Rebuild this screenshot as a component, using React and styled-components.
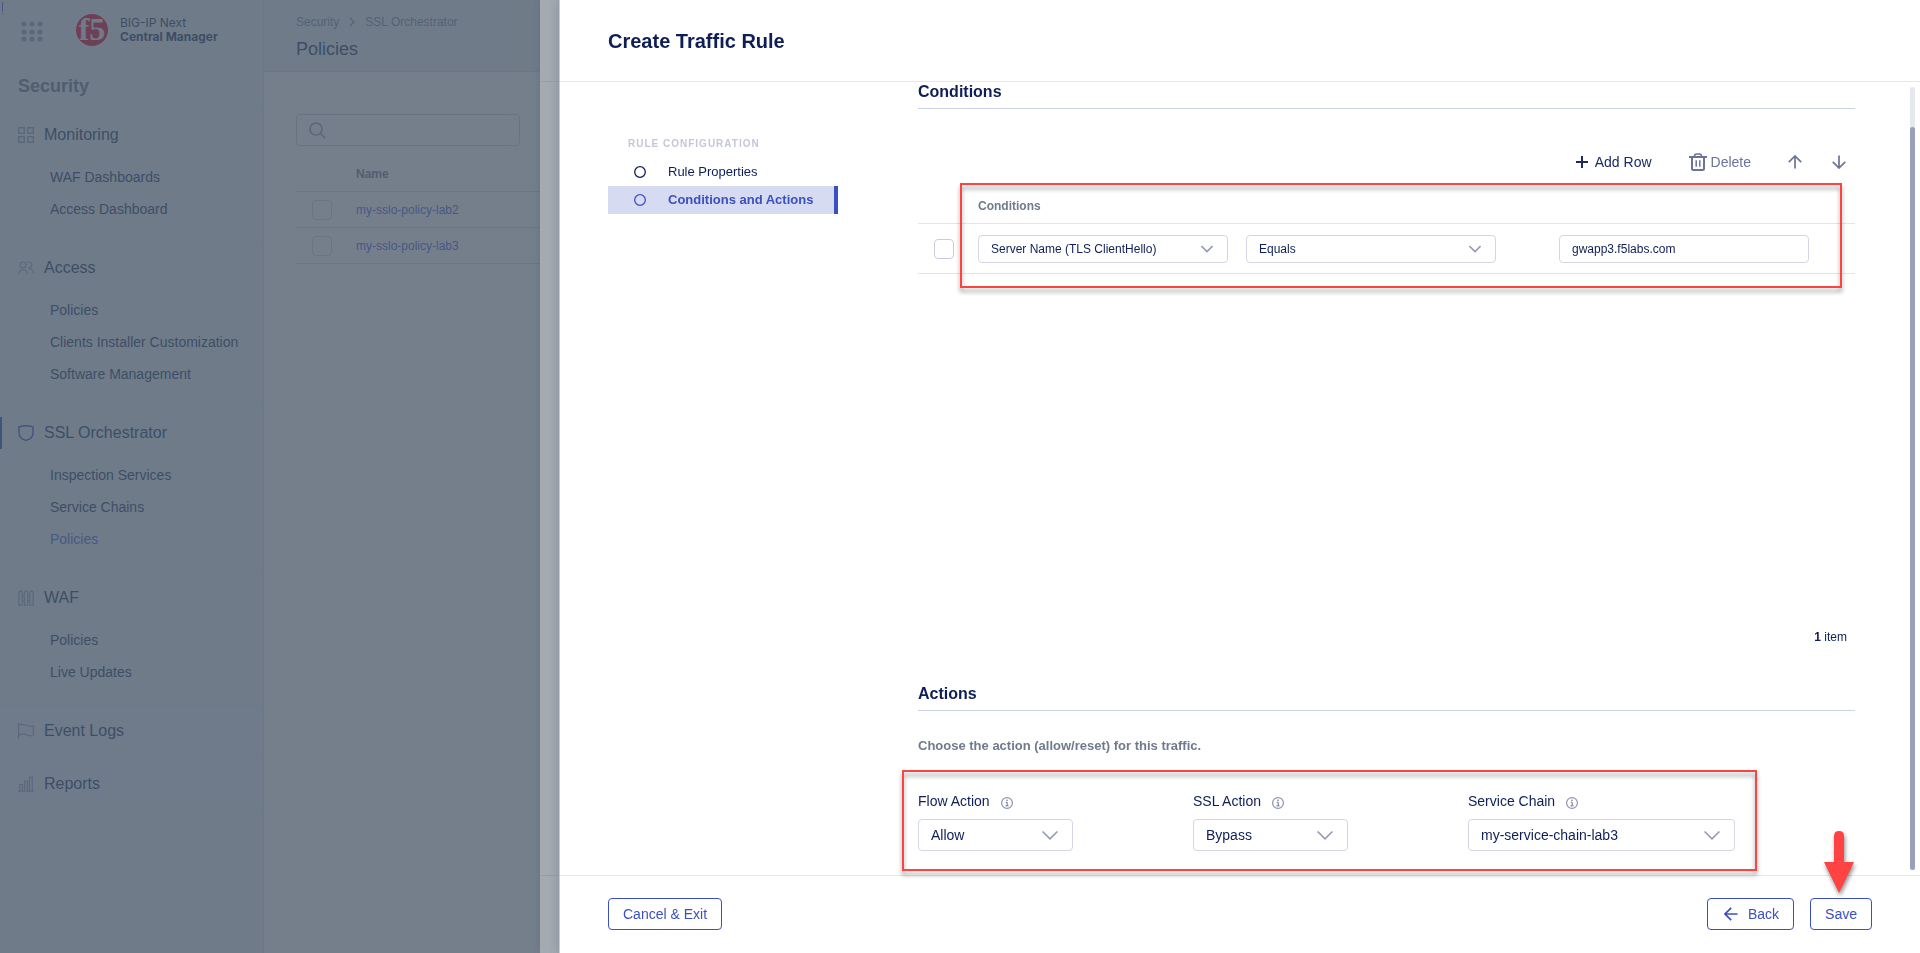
import React from "react";
import styled, { createGlobalStyle, css } from "styled-components";

const c = {
  navy: "#0f1e57",
  ink: "#22356a",
  blue: "#3b50c0",
  link: "#4a60e4",
  slate: "#6f7b8c",
  muted: "#9499b8",
  icon: "#6b739c",
  border: "#d3d6e6",
  rule: "#e4e6f0",
  red: "#ff4343",
};

const GlobalStyle = createGlobalStyle`
  *, *::before, *::after { box-sizing: border-box; }
  body {
    margin: 0;
    background: #fff;
    color: ${c.navy};
    font-family: "Liberation Sans", Arial, sans-serif;
    font-size: 14px;
  }
  button, input, select { font: inherit; color: inherit; }
  h1, h2, p, ul { margin: 0; padding: 0; }
  ul { list-style: none; }
  a { color: inherit; text-decoration: none; }
  svg { display: block; flex: none; }
`;

/* ---------- shared controls ---------- */

const Checkbox = styled.input.attrs({ type: "checkbox" })`
  appearance: none;
  display: block;
  width: 20px;
  height: 20px;
  margin: 0 0 0 16px;
  border: 1px solid ${(p) => (p.$soft ? "#d0d5e2" : "#c9ccdf")};
  border-radius: 4px;
  background: ${(p) => (p.$soft ? "transparent" : "#fff")};
`;

const fieldBox = css`
  width: 100%;
  height: ${(p) => (p.$large ? "32px" : "28px")};
  padding: 0 12px;
  border: 1px solid ${c.border};
  border-radius: 4px;
  background: #fff;
  font-size: ${(p) => (p.$large ? "14px" : "12px")};
`;

const TextInput = styled.input.attrs({ type: "text" })`
  ${fieldBox}
  display: block;
  width: 250px;
`;

const NativeSelect = styled.select`
  ${fieldBox}
  appearance: none;
  grid-area: 1 / 1;
`;

const SelectShell = styled.span`
  display: grid;
  width: ${(p) => p.$width};
  align-items: center;

  svg {
    grid-area: 1 / 1;
    justify-self: end;
    margin-right: 15px;
    pointer-events: none;
  }
`;

function Select({ id, label, value, width = "250px", large }) {
  const size = large ? 16 : 12;
  return (
    <SelectShell $width={width}>
      <NativeSelect id={id} aria-label={label} defaultValue={value} $large={large}>
        <option>{value}</option>
      </NativeSelect>
      <svg width={size} height={size} viewBox={`0 0 ${size} ${size}`} fill="none" stroke={c.muted} strokeWidth="1.600">
        <path d={large ? "M.6 4.500 8 11.900 15.400 4.500" : "M.4 3 6 8.600 11.600 3"} />
      </svg>
    </SelectShell>
  );
}

/* ---------- page behind the drawer ---------- */

const Page = styled.div`
  position: relative;
  display: grid;
  grid-template-columns: 264px 1fr;
  min-height: 100vh;
  background: #fff;
`;

const CornerMark = styled.svg`
  position: absolute;
  top: 2px;
  left: 2px;
`;

const Sidebar = styled.aside`
  border-right: 1px solid #dbe1e6;
  background: #e9eff2;
`;

const Brand = styled.div`
  display: flex;
  align-items: center;
  height: 60px;
  padding-left: 20px;
  gap: 32px;
`;

const BrandLink = styled.a`
  display: flex;
  align-items: center;
  gap: 12px;

  svg {
    overflow: visible;
  }
`;

const BrandText = styled.span`
  display: flex;
  flex-direction: column;
  color: ${c.ink};
  font: 400 12px/14px Inter, sans-serif;

  b {
    font-weight: 700;
  }
`;

const IconButton = styled.button`
  display: flex;
  padding: 0;
  border: 0;
  background: none;
`;

const SideTitle = styled.h2`
  height: 48px;
  padding: 14px 18px 0;
  color: #6c7595;
  font-size: 18px;
  line-height: 24px;
`;

const Section = styled.section`
  border-top: 1px solid #dee4ea;
  background: ${(p) => (p.$plain ? "#eaeef8" : "transparent")};
`;

const SectionLink = styled.a`
  display: flex;
  align-items: center;
  gap: 10px;
  height: 32px;
  margin: 10px 0;
  padding-left: 16px;
  border-left: 2px solid ${(p) => (p.$active ? c.blue : "transparent")};
  color: ${c.ink};
  font-size: 16px;

  svg {
    color: ${(p) => (p.$active ? c.blue : "#98a1b9")};
  }
`;

const SubList = styled.ul`
  padding-bottom: 16px;

  a {
    display: flex;
    align-items: center;
    height: 32px;
    padding-left: 50px;
    color: ${c.ink};
  }

  a[aria-current] {
    color: ${c.link};
  }
`;

const LastLine = styled.div`
  border-top: 1px solid #dee4ea;
`;

const PageHeader = styled.header`
  height: 72px;
  padding: 14px 32px 0;
  border-bottom: 1px solid #d8dee6;
  background: #e9eff2;

  h1 {
    margin-top: 7px;
    color: ${c.ink};
    font-size: 18px;
    font-weight: 400;
    line-height: 24px;
  }
`;

const Crumbs = styled.nav`
  display: flex;
  align-items: center;
  gap: 9px;
  height: 16px;
  color: #7d85a8;
  font-size: 12px;
`;

const PageBody = styled.div`
  padding: 42px 32px;
`;

const Search = styled.label`
  display: flex;
  align-items: center;
  width: 224px;
  height: 32px;
  padding-left: 12px;
  border: 1px solid #c8cede;
  border-radius: 4px;

  input {
    flex: 1;
    min-width: 0;
    border: 0;
    background: none;
  }
`;

const PolicyTable = styled.table`
  width: 100%;
  margin-top: 11px;
  border-collapse: separate;
  border-spacing: 0;
  font-size: 12px;
  text-align: left;

  th,
  td {
    height: 36px;
    padding: 0;
    border-bottom: 1px solid #d8dce4;
  }

  th {
    height: 35px;
    color: ${c.slate};
  }

  th:first-child {
    width: 60px;
  }

  a {
    color: ${c.link};
  }
`;

const glyphs = {
  monitoring: (
    <path d="M.7.7h5.600v5.600H.7zM9.700.7h5.600v5.600H9.700zM.7 9.700h5.600v5.600H.7zM9.700 9.700h5.600v5.600H9.700z" strokeWidth="1.400" />
  ),
  access: (
    <>
      <circle cx="5" cy="5" r="3" />
      <path d="M.7 13.500a4.400 4.400 0 0 1 8.700 0M9 2.600a3 3 0 1 1 1 5.300M11.400 8.900a4.400 4.400 0 0 1 4 4.600" />
    </>
  ),
  shield: <path d="M1 1.900Q8-.4 15 1.900V8q0 5.500-7 7.400Q1 13.500 1 8z" strokeWidth="1.400" />,
  waf: (
    <path d="M.8 3.600Q1 .8 2.500.8t1.700 2.800v11.600H.8zM6.300 3.600Q6.500.8 8 .8t1.700 2.800v11.600H6.300zM11.800 3.600q.2-2.800 1.700-2.800t1.700 2.800v11.600h-3.400zM4.200 5.500h2.100M4.200 10.500h2.100M9.700 5.500h2.100M9.700 10.500h2.100" />
  ),
  flag: <path d="M.6 0v16M.6 2C3 .8 5.500 1.200 8 2.300s5 1.300 7.400.4v9.500c-2 .8-4.400.8-6.900-.4s-5-.8-7.900.4" />,
  reports: <path d="M0 15.200h16M1.700 15V8.500h2.800V15M6.600 15V5h2.800v10M11.500 15V1h2.800v14" />,
};

function Glyph({ name }) {
  return (
    <svg width="16" height="16" viewBox="0 0 16 16" fill="none" stroke="currentColor" strokeWidth="1.200">
      {glyphs[name]}
    </svg>
  );
}

const sections = [
  { name: "Monitoring", icon: "monitoring", items: ["WAF Dashboards", "Access Dashboard"] },
  { name: "Access", icon: "access", items: ["Policies", "Clients Installer Customization", "Software Management"] },
  {
    name: "SSL Orchestrator",
    icon: "shield",
    active: true,
    items: ["Inspection Services", "Service Chains", "Policies"],
    current: "Policies",
  },
  { name: "WAF", icon: "waf", items: ["Policies", "Live Updates"] },
  { name: "Event Logs", icon: "flag" },
  { name: "Reports", icon: "reports" },
];

function AppSidebar() {
  return (
    <Sidebar>
      <Brand>
        <IconButton aria-label="Workspaces">
          <svg width="24" height="24" viewBox="0 0 24 24" fill="#98a1b4">
            {[6, 14, 21].map((y) =>
              [4, 12, 20].map((x) => <circle key={`${x}-${y}`} cx={x} cy={y} r="2.600" />)
            )}
          </svg>
        </IconButton>
        <BrandLink href="#home">
          <svg width="32" height="32" viewBox="0 0 32 32">
            <circle cx="16" cy="16" r="16" fill="#e4002b" />
            <text x="16" y="26" textAnchor="middle" fill="#e9eff2" fontFamily="Liberation Serif, serif" fontWeight="700" fontSize="32">
              f5
            </text>
          </svg>
          <BrandText>
            BIG-IP Next
            <b>Central Manager</b>
          </BrandText>
        </BrandLink>
      </Brand>
      <SideTitle>Security</SideTitle>
      {sections.map((s) => (
        <Section key={s.name} $plain={!s.items}>
          <SectionLink href="#section" $active={s.active}>
            <Glyph name={s.icon} />
            {s.name}
          </SectionLink>
          {s.items && (
            <SubList>
              {s.items.map((item) => (
                <li key={item}>
                  <a href="#item" aria-current={s.current === item ? "page" : undefined}>
                    {item}
                  </a>
                </li>
              ))}
            </SubList>
          )}
        </Section>
      ))}
      <LastLine />
    </Sidebar>
  );
}

function PoliciesPage() {
  return (
    <Page>
      <AppSidebar />
      <main>
        <PageHeader>
          <Crumbs>
            <a href="#security">Security</a>
            <svg width="8" height="10" viewBox="0 0 8 10" fill="none" stroke="currentColor" strokeWidth="1.200">
              <path d="M2 1l4 4-4 4" />
            </svg>
            <a href="#sslo">SSL Orchestrator</a>
          </Crumbs>
          <h1>Policies</h1>
        </PageHeader>
        <PageBody>
          <Search>
            <svg width="17" height="17" viewBox="0 0 17 17" fill="none" stroke={c.muted} strokeWidth="1.600">
              <circle cx="7" cy="7" r="6" />
              <path d="M11.300 11.300l5 5" />
            </svg>
            <input type="search" aria-label="Search policies" />
          </Search>
          <PolicyTable>
            <thead>
              <tr>
                <th />
                <th>Name</th>
              </tr>
            </thead>
            <tbody>
              {["my-sslo-policy-lab2", "my-sslo-policy-lab3"].map((name) => (
                <tr key={name}>
                  <td>
                    <Checkbox $soft aria-label={`Select ${name}`} />
                  </td>
                  <td>
                    <a href="#policy">{name}</a>
                  </td>
                </tr>
              ))}
            </tbody>
          </PolicyTable>
        </PageBody>
      </main>
      <CornerMark width="1" height="12" viewBox="0 0 1 12" fill={c.link}>
        <path d="M0 0h1v10H0zM0 11h1v1H0z" />
      </CornerMark>
    </Page>
  );
}

/* ---------- drawers ---------- */

const Overlay = styled.div`
  position: fixed;
  inset: 0;
  background: rgba(71, 85, 101, 0.5);
`;

const Drawer = styled.div`
  position: fixed;
  top: 0;
  right: 0;
  bottom: 0;
  left: ${(p) => p.$left};
  display: flex;
  flex-direction: column;
  border-left: 1px solid ${(p) => (p.$edge ? "#c6cbda" : "transparent")};
  background: #fff;
  box-shadow: 0 0 10px rgba(30, 40, 80, 0.22);
`;

const DrawerHeader = styled.header`
  flex: none;
  display: flex;
  align-items: center;
  height: 82px;
  padding: 0 48px;
  border-bottom: 1px solid ${c.rule};

  h1 {
    font-size: 20px;
    line-height: 24px;
  }
`;

const DrawerBody = styled.div`
  flex: 1;
  min-height: 0;
  display: flex;
  padding-left: 48px;
`;

const DrawerFooter = styled.footer`
  flex: none;
  display: flex;
  align-items: flex-start;
  gap: 16px;
  height: 78px;
  padding: 22px 48px 0;
  border-top: 1px solid ${c.rule};
`;

const StepNav = styled.nav`
  flex: none;
  width: 230px;
  padding-top: 52px;
`;

const StepCaption = styled.div`
  padding-left: 20px;
  color: #c3c7d8;
  font-size: 10px;
  font-weight: 700;
  letter-spacing: 1px;
  line-height: 20px;
`;

const Step = styled.a`
  display: flex;
  align-items: center;
  gap: 22px;
  height: 28px;
  padding-left: 26px;
  border-right: 4px solid ${(p) => (p.$active ? c.blue : "transparent")};
  background: ${(p) => (p.$active ? "#d7dbf1" : "transparent")};
  color: ${(p) => (p.$active ? c.blue : c.navy)};
  font-size: 13px;
  font-weight: ${(p) => (p.$active ? 700 : 400)};
  line-height: 14px;
  white-space: nowrap;

  &:first-of-type {
    margin-top: 4px;
  }
`;

const Content = styled.div`
  flex: 1;
  min-width: 0;
  display: flex;
  flex-direction: column;
  margin: 0 55px 0 80px;
  padding-bottom: 24px;
`;

const Heading = styled.h2`
  padding-bottom: 6px;
  border-bottom: 1px solid #cdd1e4;
  font-size: 16px;
  line-height: 20px;
`;

const Toolbar = styled.div`
  display: flex;
  justify-content: flex-end;
  gap: 37px;
  height: 40px;
  margin: 33px 9px 8px 0;
`;

const Tool = styled.button`
  display: flex;
  align-items: center;
  gap: ${(p) => (p.$tight ? "4px" : "7px")};
  padding: 0;
  border: 0;
  background: none;
  color: ${(p) => (p.$strong ? "#1c2a62" : c.icon)};
`;

const ToolArrows = styled.div`
  display: flex;
  gap: 30px;
`;

const TableWrap = styled.div`
  position: relative;
`;

const ConditionTable = styled.table`
  width: 100%;
  border-collapse: separate;
  border-spacing: 0;
  text-align: left;

  th,
  td {
    border-bottom: 1px solid #e4e5ec;
  }

  th {
    height: 34px;
    padding: 0 0 2px;
    color: ${c.slate};
    font-size: 12px;
  }

  td {
    padding: 11px 0 10px;
  }

  col.check {
    width: 60px;
  }

  col.attribute {
    width: 268px;
  }

  col.operator {
    width: 313px;
  }
`;

const Highlight = styled.div`
  position: absolute;
  inset: ${(p) => p.$inset};
  border: 2px solid ${c.red};
  filter: drop-shadow(0 4px 2px rgba(0, 0, 0, 0.4));
  pointer-events: none;
`;

const ItemCount = styled.div`
  margin: auto 8px 39px 0;
  font-size: 12px;
  line-height: 16px;
  text-align: right;
`;

const Hint = styled.p`
  margin: 25px 0 35px;
  color: ${c.slate};
  font-size: 13px;
  font-weight: 700;
  line-height: 20px;
`;

const ActionFields = styled.div`
  position: relative;
  display: flex;
  gap: 120px;
  align-self: flex-start;
`;

const Field = styled.div`
  display: flex;
  flex-direction: column;
  gap: 8px;
`;

const FieldLabel = styled.label`
  display: flex;
  align-items: center;
  gap: 11px;
  height: 20px;
  line-height: 20px;

  svg {
    margin-top: 4px;
  }
`;

const ScrollTrack = styled.div`
  flex: none;
  display: flex;
  width: 5px;
  margin: 5px 5px 5px 0;
  padding-top: 40px;
  border-radius: 3px;
  background: #e6e8ef;

  &::after {
    content: "";
    flex: 1;
    border-radius: 3px;
    background: #9aa0ba;
  }
`;

const Button = styled.button`
  display: flex;
  align-items: center;
  gap: 10px;
  height: 32px;
  padding: 0 14px 0 ${(p) => (p.$withIcon ? "16px" : "14px")};
  border: 1px solid ${c.blue};
  border-radius: 4px;
  background: #fff;
  color: ${c.blue};
`;

const FooterRight = styled.div`
  display: flex;
  gap: 16px;
  margin-left: auto;
`;

const SaveSlot = styled.div`
  position: relative;
`;

const Pointer = styled.svg`
  position: absolute;
  left: 13px;
  bottom: 37px;
  overflow: visible;
  filter: drop-shadow(1px 3px 2px rgba(0, 0, 0, 0.45));
`;

function InfoIcon() {
  return (
    <svg width="12" height="12" viewBox="0 0 12 12" fill="none" stroke="#8d93b3">
      <circle cx="6" cy="6" r="5.400" strokeWidth="1.200" />
      <path d="M4.800 5.300H6.200V8.700M4.500 8.800H7.600" stroke={c.icon} />
      <circle cx="6" cy="3.300" r=".8" fill={c.icon} stroke="none" />
    </svg>
  );
}

function StepCircle() {
  return (
    <svg width="12" height="12" viewBox="0 0 12 12" fill="none" stroke="currentColor" strokeWidth="1.300">
      <circle cx="6" cy="6" r="5.300" />
    </svg>
  );
}

function ArrowIcon({ turn = 0 }) {
  return (
    <svg width="14" height="14" viewBox="0 0 14 14" fill="none" stroke="currentColor" strokeWidth="1.700">
      <path transform={`rotate(${turn} 7 7)`} d="M7 13.600V1.200M.8 7.200 7 1l6.200 6.200" />
    </svg>
  );
}

const actions = [
  { id: "flow-action", label: "Flow Action", value: "Allow", width: "155px" },
  { id: "ssl-action", label: "SSL Action", value: "Bypass", width: "155px" },
  { id: "service-chain", label: "Service Chain", value: "my-service-chain-lab3", width: "267px" },
];

function TrafficRuleDrawer() {
  return (
    <Drawer $left="559px" $edge role="dialog" aria-label="Create Traffic Rule">
      <DrawerHeader>
        <h1>Create Traffic Rule</h1>
      </DrawerHeader>
      <DrawerBody>
        <StepNav>
          <StepCaption>RULE CONFIGURATION</StepCaption>
          <Step href="#properties">
            <StepCircle />
            Rule Properties
          </Step>
          <Step href="#conditions" $active>
            <StepCircle />
            Conditions and Actions
          </Step>
        </StepNav>
        <Content>
          <Heading>Conditions</Heading>
          <Toolbar>
            <Tool $strong>
              <svg width="12" height="12" viewBox="0 0 12 12" stroke="currentColor" strokeWidth="2">
                <path d="M6 0v12M0 6h12" />
              </svg>
              Add Row
            </Tool>
            <Tool $tight>
              <svg width="18" height="18" viewBox="0 0 18 18" fill="none" stroke="currentColor" strokeWidth="2">
                <path d="M0 4h18" />
                <path d="M3 4v11.500Q3 17 4.500 17h9q1.500 0 1.500-1.500V4" />
                <path d="M5.500 3.500Q5.500 1 7.500 1h3q2 0 2 2.500" strokeWidth="1.600" />
                <path d="M7.200 7.300v6.400M10.800 7.300v6.400" strokeWidth="1.500" />
              </svg>
              Delete
            </Tool>
            <ToolArrows>
              <Tool aria-label="Move up">
                <ArrowIcon />
              </Tool>
              <Tool aria-label="Move down">
                <ArrowIcon turn={180} />
              </Tool>
            </ToolArrows>
          </Toolbar>
          <TableWrap>
            <ConditionTable>
              <colgroup>
                <col className="check" />
                <col className="attribute" />
                <col className="operator" />
                <col />
              </colgroup>
              <thead>
                <tr>
                  <th />
                  <th colSpan={3}>Conditions</th>
                </tr>
              </thead>
              <tbody>
                <tr>
                  <td>
                    <Checkbox aria-label="Select condition" />
                  </td>
                  <td>
                    <Select label="Condition attribute" value="Server Name (TLS ClientHello)" />
                  </td>
                  <td>
                    <Select label="Condition operator" value="Equals" />
                  </td>
                  <td>
                    <TextInput aria-label="Condition value" defaultValue="gwapp3.f5labs.com" />
                  </td>
                </tr>
              </tbody>
            </ConditionTable>
            <Highlight $inset="-7px 13px -14px 42px" />
          </TableWrap>
          <ItemCount>
            <b>1</b> item
          </ItemCount>
          <Heading>Actions</Heading>
          <Hint>Choose the action (allow/reset) for this traffic.</Hint>
          <ActionFields>
            {actions.map((a) => (
              <Field key={a.id}>
                <FieldLabel htmlFor={a.id}>
                  {a.label}
                  <InfoIcon />
                </FieldLabel>
                <Select id={a.id} value={a.value} width={a.width} large />
              </Field>
            ))}
            <Highlight $inset="-21px -22px -20px -16px" />
          </ActionFields>
        </Content>
        <ScrollTrack />
      </DrawerBody>
      <DrawerFooter>
        <Button>Cancel &amp; Exit</Button>
        <FooterRight>
          <Button $withIcon>
            <ArrowIcon turn={-90} />
            Back
          </Button>
          <SaveSlot>
            <Button>Save</Button>
            <Pointer width="32" height="62" viewBox="0 0 32 62" fill={c.red}>
              <path d="M11 31V5q0-5 5-5t5 5v26h10L16 62 1 31z" />
            </Pointer>
          </SaveSlot>
        </FooterRight>
      </DrawerFooter>
    </Drawer>
  );
}

export default function App() {
  return (
    <>
      <GlobalStyle />
      <PoliciesPage />
      <Overlay />
      <Drawer $left="540px" aria-hidden="true">
        <DrawerHeader />
        <DrawerBody />
        <DrawerFooter />
      </Drawer>
      <Overlay />
      <TrafficRuleDrawer />
    </>
  );
}
